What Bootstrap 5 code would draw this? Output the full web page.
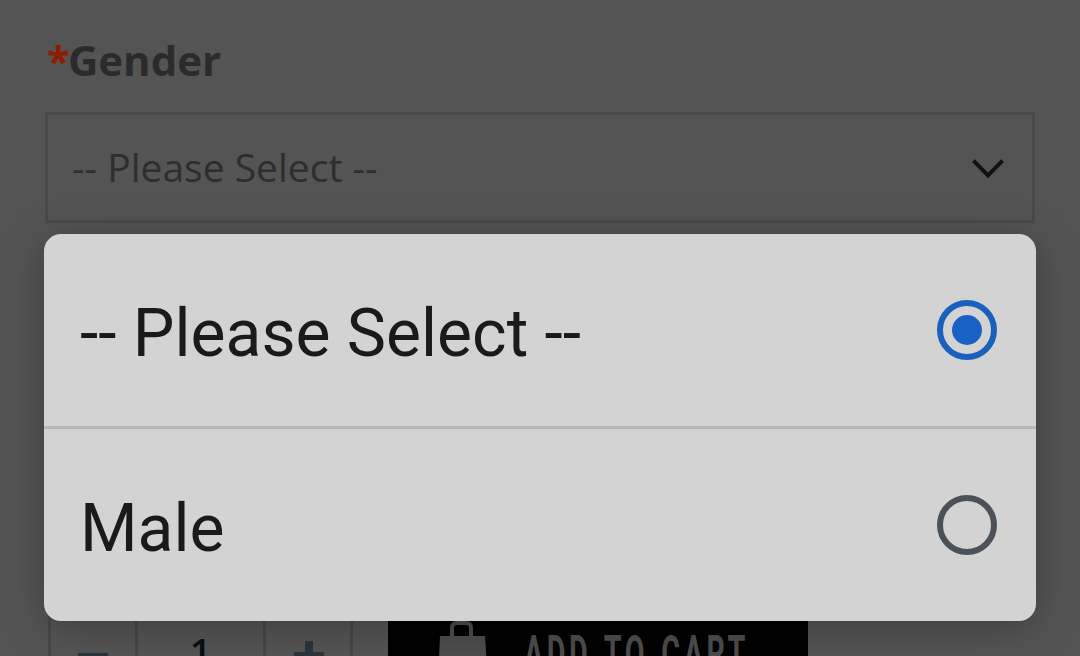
<!DOCTYPE html>
<html lang="en">
<head>
<meta charset="utf-8">
<meta name="viewport" content="width=device-width, initial-scale=1">
<title>Gender</title>
<link href="https://cdn.jsdelivr.net/npm/bootstrap@5.3.0/dist/css/bootstrap.min.css" rel="stylesheet">
<style>
body{background:#545454;font-family:"Open Sans",sans-serif;height:656px;overflow:hidden}
.page-body{height:656px;padding:0 45px;overflow:hidden}
.field-label{font-size:42px;font-weight:700;line-height:56px;color:#2b2b2b;padding:32px 0 0 2px;height:112px;margin:0}
.field-label span{color:#8f1d04;margin-right:-2px}
.select-box{height:111px;border:3px solid #4a4a4a;padding:0 28px 0 24px;font-size:39px;color:#2e2e2e;line-height:1}
.select-box span{margin-top:-2px}
.select-box svg{margin-top:2px}
.buy-row{margin-top:377px;height:100px;padding-left:3px}
.qty{width:305px;height:100px;border:3px solid #484848;color:#0a0f16;font-size:38px}
.qty>div{height:100%}
.qty .step{width:84px}
.qty .step svg{display:block;margin:38px auto 0 27px}
.qty .step:last-child svg{margin-left:28px}
.qty .mid{border-left:3px solid #484848;border-right:3px solid #484848;padding-top:29px;line-height:38px;font-weight:600}
.cart-btn{margin-left:35px;width:420px;height:100px;background:#000;color:#4d4d4d;border:0;border-radius:0;padding:21px 0 0 50px}
.cart-label{font-family:"Roboto",sans-serif;font-weight:700;font-size:50px;line-height:52px;letter-spacing:6px;word-spacing:5px;transform:scaleX(.575);transform-origin:0 0;margin:7px 0 0 36px;white-space:nowrap;display:block}
.options{left:44px;top:234px;width:992px;height:387px;border-radius:17px;background:#d3d3d3;overflow:hidden;box-shadow:0 6px 44px rgba(0,0,0,.27);font-family:"Roboto",sans-serif;font-size:66px;line-height:78px;color:#1a1a1a}
.option{height:192px;padding:0 39px 0 36px}
.option+.option{border-top:3px solid #b7b7b7;height:195px}
.option span{padding-top:7px}
</style>
<script src="https://cdn.jsdelivr.net/npm/bootstrap@5.3.0/dist/js/bootstrap.bundle.min.js"></script>
</head>
<body class="position-relative">
<main class="page-body">
  <h2 class="field-label"><span>*</span>Gender</h2>
  <div class="select-box d-flex align-items-center justify-content-between">
    <span>-- Please Select --</span>
    <svg width="32" height="20" viewBox="0 0 32 20" fill="none" stroke="#111" stroke-width="4"><path d="M1.500 1.700 16 16.300 30.500 1.700"/></svg>
  </div>
  <div class="buy-row d-flex">
    <div class="qty d-flex text-center flex-shrink-0">
      <div class="step"><svg width="30" height="30" viewBox="0 0 30 30" fill="#2b353b"><path d="M0 12h30v6H0z"/></svg></div>
      <div class="mid flex-grow-1">1</div>
      <div class="step"><svg width="30" height="30" viewBox="0 0 30 30" fill="#2b353b"><path d="M0 11h11V0h8v11h11v8H19v11h-8V19H0z"/></svg></div>
    </div>
    <div class="cart-btn d-flex align-items-start flex-shrink-0">
      <svg class="flex-shrink-0" width="50" height="60" viewBox="0 0 50 60" fill="#4d4d4d"><path d="M2 15H47L50 60H0Z"/><path d="M14 16V7q0-5 5-5h9q5 0 5 5v9" fill="none" stroke="#4d4d4d" stroke-width="4"/></svg>
      <span class="cart-label">ADD TO CART</span>
    </div>
  </div>
</main>
<div class="options position-absolute">
  <div class="option d-flex align-items-center justify-content-between">
    <span>-- Please Select --</span>
    <svg width="60" height="60" viewBox="0 0 60 60"><circle cx="30" cy="30" r="27" fill="none" stroke="#1961bd" stroke-width="6"/><circle cx="30" cy="30" r="15" fill="#1961c2"/></svg>
  </div>
  <div class="option d-flex align-items-center justify-content-between">
    <span>Male</span>
    <svg width="60" height="60" viewBox="0 0 60 60"><circle cx="30" cy="30" r="27" fill="none" stroke="#4c5157" stroke-width="6"/></svg>
  </div>
</div>
</body>
</html>
